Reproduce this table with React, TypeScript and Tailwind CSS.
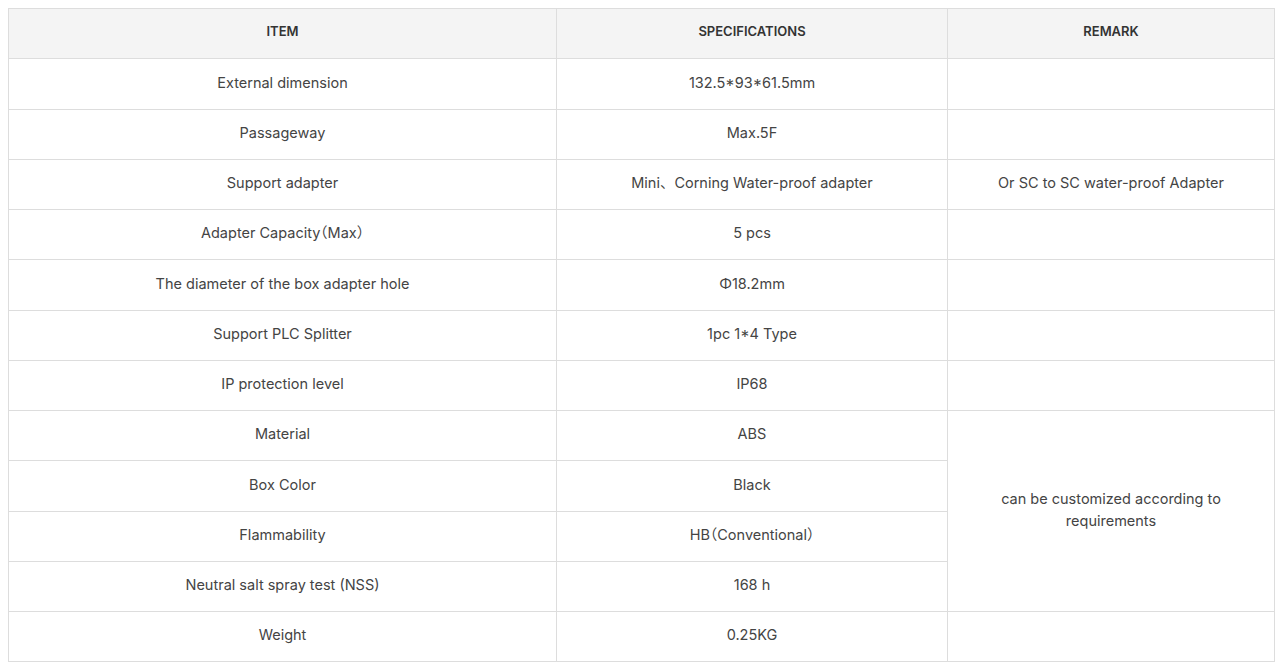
const rows: { item: string; spec: string }[] = [
  { item: "External dimension", spec: "132.5*93*61.5mm" },
  { item: "Passageway", spec: "Max.5F" },
  { item: "Support adapter", spec: "Mini、Corning Water-proof adapter" },
  { item: "Adapter Capacity（Max）", spec: "5 pcs" },
  { item: "The diameter of the box adapter hole", spec: "Φ18.2mm" },
  { item: "Support PLC Splitter", spec: "1pc 1*4 Type" },
  { item: "IP protection level", spec: "IP68" },
  { item: "Material", spec: "ABS" },
  { item: "Box Color", spec: "Black" },
  { item: "Flammability", spec: "HB（Conventional）" },
  { item: "Neutral salt spray test (NSS)", spec: "168 h" },
  { item: "Weight", spec: "0.25KG" },
];

// full-width brackets get tightened, the 、 keeps its normal width
const cell = "border border-[#dddddd] h-[50.25px] text-center align-middle px-4 pb-[3px] [&:has(.fw)]:[font-feature-settings:'halt']";

function Text({ t }: { t: string }) {
  return <span className={t.includes("（") ? "fw [font-feature-settings:'halt']" : ""}>{t}</span>;
}

export default function App() {
  return (
    <div className="bg-white p-2 font-['Inter','Noto_Sans_CJK_SC',sans-serif] text-[14.5px] text-[#444444]">
      <table className="w-[1266px] border-collapse table-fixed">
        <colgroup>
          <col className="w-[548px]" />
          <col className="w-[391px]" />
          <col className="w-[327px]" />
        </colgroup>
        <thead>
          <tr className="bg-[#f4f4f4]">
            <th className={`${cell} text-[13px] font-semibold text-[#333333]`}>ITEM</th>
            <th className={`${cell} text-[13px] font-semibold text-[#333333]`}>SPECIFICATIONS</th>
            <th className={`${cell} text-[13px] font-semibold text-[#333333]`}>REMARK</th>
          </tr>
        </thead>
        <tbody>
          {rows.map((r, i) => (
            <tr key={i}>
              <td className={cell}><Text t={r.item} /></td>
              <td className={cell}><Text t={r.spec} /></td>
              {i === 2 && <td className={cell}>Or SC to SC water-proof Adapter</td>}
              {i === 7 && (
                <td className={cell} rowSpan={4}>
                  <div className="mx-auto w-[240px] leading-[22px]">
                    can be customized according to requirements
                  </div>
                </td>
              )}
              {i !== 2 && (i < 7 || i > 10) && <td className={cell}></td>}
            </tr>
          ))}
        </tbody>
      </table>
    </div>
  );
}
